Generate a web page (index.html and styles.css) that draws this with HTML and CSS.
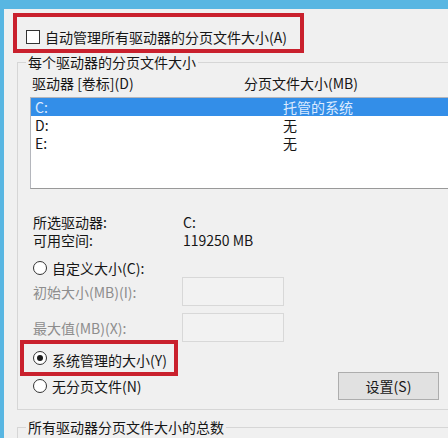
FILE: index.html
```html
<!DOCTYPE html>
<html lang="zh-CN">
<head>
    <meta charset="UTF-8">
    <meta name="viewport" content="width=device-width, initial-scale=1.0">
    <title>虚拟内存</title>
    <link rel="stylesheet" href="styles.css">
</head>
<body>
    <div class="window">
        <label class="auto-manage mark">
            <span class="checkbox"></span>自动管理所有驱动器的分页文件大小(A)
        </label>

        <fieldset class="group">
            <legend>每个驱动器的分页文件大小</legend>
            <div class="group-body">
                <div class="list-head">
                    <span class="head-drive">驱动器 [卷标](D)</span>
                    <span>分页文件大小(MB)</span>
                </div>
                <ul class="drive-list">
                    <li class="selected"><span class="col-drive">C:</span><span>托管的系统</span></li>
                    <li><span class="col-drive">D:</span><span>无</span></li>
                    <li><span class="col-drive">E:</span><span>无</span></li>
                </ul>

                <div class="info"><span class="info-label">所选驱动器:</span><span>C:</span></div>
                <div class="info"><span class="info-label">可用空间:</span><span>119250 MB</span></div>

                <label class="option first-option"><span class="radio"></span>自定义大小(C):</label>
                <div class="size-row">
                    <span class="size-label">初始大小(MB)(I):</span>
                    <span class="size-input"></span>
                </div>
                <div class="size-row gap">
                    <span class="size-label">最大值(MB)(X):</span>
                    <span class="size-input"></span>
                </div>

                <label class="option system-option mark"><span class="radio checked"></span>系统管理的大小(Y)</label>
                <div class="last-row">
                    <label class="option none-option"><span class="radio"></span>无分页文件(N)</label>
                    <button class="set-btn">设置(S)</button>
                </div>
            </div>
        </fieldset>

        <fieldset class="group total">
            <legend>所有驱动器分页文件大小的总数</legend>
        </fieldset>
    </div>
</body>
</html>
```

FILE: styles.css
```css
html, body {
    margin: 0;
    width: 448px;
    height: 438px;
    overflow: hidden;
}
body {
    background: #f0f0f0;
    font-family: "Noto Sans CJK SC", "Noto Sans", sans-serif;
    font-size: 14px;
    color: #161616;
}
.window {
    box-sizing: border-box;
    width: 448px;
    height: 438px;
    overflow: hidden;
    border-top: 9px solid #58b6e2;
    border-left: 4px solid #58b6e2;
    padding-top: 4px;
    background: #f0f0f0;
}
.mark {
    border: 4px solid #c9202d;
    box-sizing: border-box;
}
.checkbox, .radio {
    display: inline-block;
    box-sizing: border-box;
    width: 14px;
    height: 14px;
    border: 1px solid #333;
    background: #fff;
    flex: none;
}
.radio {
    border-radius: 50%;
    margin-right: 5px;
    position: relative;
}
.radio.checked::after {
    content: '';
    position: absolute;
    left: 3px;
    top: 3px;
    width: 6px;
    height: 6px;
    border-radius: 50%;
    background: #1a1a1a;
}
.auto-manage {
    display: flex;
    align-items: center;
    margin-left: 9px;
    width: 291px;
    height: 40px;
    padding: 11px 0 3px 9px;
    line-height: 18px;
}
.auto-manage .checkbox {
    width: 14px;
    height: 14px;
    margin-right: 5px;
}
.group {
    box-sizing: border-box;
    margin: 1px 0 0 13px;
    width: 470px;
    padding: 4px 0 9px 0;
    border: 1px solid #d6d6d6;
    min-width: 0;
}
.group legend {
    margin-left: 8px;
    padding: 0 2px;
    line-height: 16px;
}
.group-body {
    padding-left: 15px;
}
.list-head {
    display: flex;
    line-height: 18px;
    margin-left: -1px;
}
.head-drive {
    width: 212px;
}
.drive-list {
    list-style: none;
    margin: 5px 0 0 -3px;
    padding: 0;
    width: 440px;
    height: 92px;
    box-sizing: border-box;
    border: 1px solid #b4b6bc;
    border-bottom-color: #999;
    background: #fff;
}
.drive-list li {
    display: flex;
    line-height: 18px;
    padding-left: 4px;
}
.drive-list li.selected {
    background: #338ee8;
    color: #dbeaff;
}
.col-drive {
    width: 248px;
}
.info {
    display: flex;
    line-height: 18px;
}
.drive-list + .info {
    margin-top: 24px;
}
.info-label {
    width: 150px;
}
.option {
    display: flex;
    align-items: center;
    line-height: 18px;
}
.first-option {
    margin-top: 10px;
}
.size-row {
    display: flex;
    align-items: center;
    color: #8d8d8d;
}
.size-row.gap {
    margin-top: 7px;
}
.size-label {
    width: 149px;
}
.size-input {
    box-sizing: border-box;
    width: 102px;
    height: 29px;
    border: 1px solid #d8d8d8;
    background: #f2f2f2;
}
.system-option {
    margin: -2px 0 0 -13px;
    width: 158px;
    height: 36px;
    padding: 7px 0 3px 9px;
    align-items: flex-start;
}
.last-row {
    display: flex;
    align-items: center;
    margin-top: -4px;
    height: 28px;
}
.none-option {
    width: 305px;
}
.set-btn {
    width: 101px;
    height: 28px;
    border: 1px solid #adadad;
    background: #e1e1e1;
    font-family: inherit;
    font-size: 14px;
    color: #161616;
    padding: 0;
}
.total {
    margin-top: 9px;
    height: 40px;
}
```
